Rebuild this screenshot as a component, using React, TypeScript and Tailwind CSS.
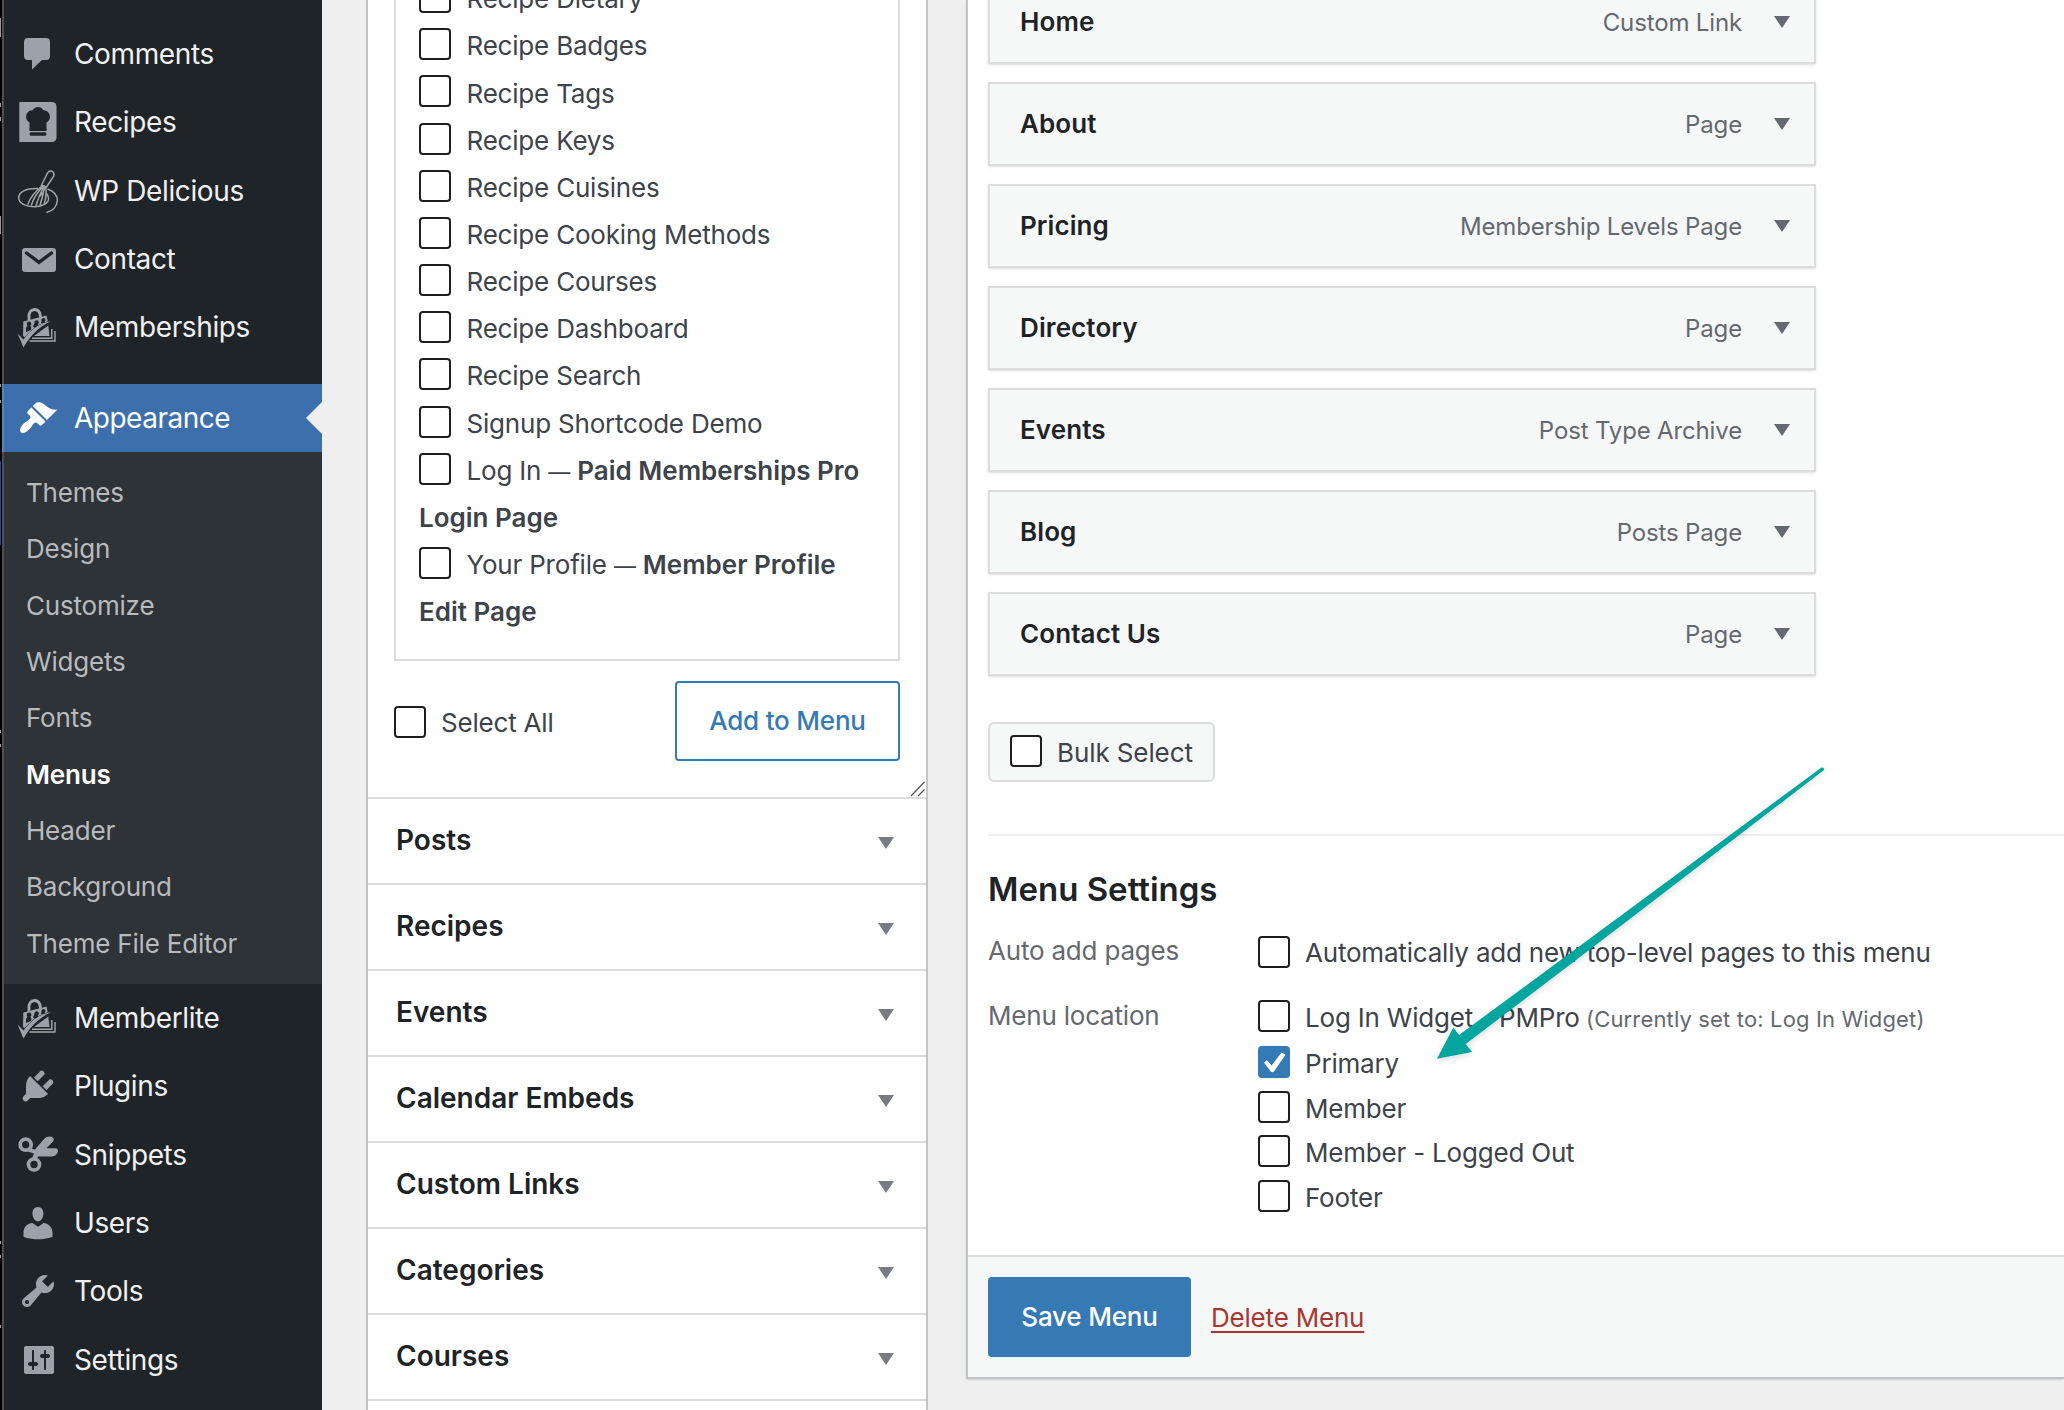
import type { ReactNode } from 'react';
import clsx from 'clsx';

const icons: Record<string, ReactNode> = {
  comments: <path d="M10 4H28a4 4 0 0 1 4 4V22a4 4 0 0 1-4 4H24L14 35.5V26H10a4 4 0 0 1-4-4V8a4 4 0 0 1 4-4z" />,
  recipes: (
    <>
      <path d="M1.3 0H34a4.5 4.5 0 0 1 4.5 4.5V35.500a4.500 4.500 0 0 1-4.500 4.500H1.300z" />
      <path
        d="M11.500 28V20.500C8.500 19 7.500 15.500 8.500 12.500C9.500 9.500 12 8.300 14.500 8.300C16 5.800 18 5 20 5S24 5.800 25.500 8.300C28 8.300 30.500 9.500 31.500 12.500C32.500 15.500 31.500 19 28.500 20.500V28z"
        fill="#1f2428"
      />
      <rect x="11.500" y="30.300" width="17" height="3.400" rx="1.700" fill="#1f2428" />
      <path d="M11.500 26.800H28.500V29H11.500z" fill="#1f2428" />
    </>
  ),
  whisk: (
    <g fill="none" stroke="#a2a7a9" strokeWidth="1.500" strokeLinecap="round">
      <path d="M23.800 13.500L29.500 2Q31.300-.8 34.200.3Q37 2 35.500 5.500L28.500 16" />
      <path d="M23.300 14.500Q26 14 28.300 16.500M23.500 15.500Q13 24 10 33M24.500 16Q16 25 13.500 34M25.500 16Q20.500 26 18 34.500M26.500 16.500Q24.500 27 22 34M28 17Q28.500 26 26.300 32.500M24 22L22 25" />
      <path d="M19.500 17.600C8 17.300.7 21 .7 26.800C.7 32.500 8 35.700 16 35.700C24 35.700 31 32 30.500 27.500C30.300 25.500 29.500 23.500 28.500 22.700" />
      <path d="M30 18.300C36 20 40 25 39.300 30C38.500 36 34 40 29 41.300" />
    </g>
  ),
  mail: (
    <>
      <rect x="4" y="9" width="34" height="24" rx="3" />
      <path d="M8.500 14L21 23.300L33.500 14" fill="none" stroke="#1f2428" strokeWidth="3.400" strokeLinecap="round" />
    </>
  ),
  pmpro: (
    <>
      <path d="M11 13.500V10C10.500 5.500 13 2.500 16.500 2.500S22.200 5 22.500 10V11" fill="none" stroke="#a2a7a9" strokeWidth="2.800" />
      <path d="M5.300 14.500L28.500 8.500L29.800 14.500C23 18 14 24 8 31L5 29z" />
      <path
        d="M8.800 17.500a2.300 2.300 0 1 1 3.500 1.300Q14 20 13 23L8 25V21Q8.500 19.500 9.500 19zM16.500 16a2.200 2.200 0 1 1 3.300 1.300L21 19L17 21L15 19.500zM23.500 13.500a2 2 0 1 1 3.300 1L28 16H23z"
        fill="#1f2428"
      />
      <path d="M16 29L30.300 18.500L31.500 29z" />
      <path d="M14 31.300H33.800V22M11.500 34H37V24" fill="none" stroke="#a2a7a9" strokeWidth="1.400" />
      <path d="M-.5 26.500L5.500 32.500C13 22 22 16 33 14.300C22 19 12 29 5.500 40.500z" stroke="#1f2428" strokeWidth="1" paintOrder="stroke" />
    </>
  ),
  brush: (
    <path
      transform="scale(2)"
      d="M14.480 11.060L7.410 3.990l1.500-1.500c.5-.56 2.300-.47 3.510.32 1.210.8 1.430 1.280 2.910 2.100 1.180.64 2.450 1.260 4.450.85zm-.71.71L6.700 4.700 4.930 6.470c-.39.39-.39 1.020 0 1.410l1.060 1.060c.39.39.39 1.030 0 1.420-.6.6-1.430 1.110-2.210 1.690-.35.26-.7.53-1.010.84C1.430 14.230.4 16.080 1.400 17.070c.99 1 2.840-.03 4.180-1.360.31-.31.58-.66.85-1.020.57-.78 1.080-1.610 1.690-2.210.39-.39 1.020-.39 1.410 0l1.060 1.060c.39.39 1.020.39 1.410 0z"
    />
  ),
  plug: (
    <path
      transform="scale(2)"
      d="M13.110 4.360L9.870 7.600 8 5.730l3.240-3.240c.35-.34 1.050-.2 1.560.32.52.51.66 1.210.31 1.550zm-8 1.770l.91-1.120 9.010 9.010-1.190.84c-.71.71-2.630 1.160-3.820 1.160H6.140L4.900 17.260c-.59.59-1.540.59-2.120 0-.59-.58-.59-1.530 0-2.120l1.240-1.240v-3.880c0-1.130.4-3.190 1.090-3.890zm7.260 3.970l3.240-3.240c.34-.35 1.040-.21 1.550.31.52.51.66 1.210.31 1.550l-3.240 3.250z"
    />
  ),
  scissors: (
    <>
      <circle cx="7.700" cy="9.700" r="5.500" fill="none" stroke="#9ca2a7" strokeWidth="3.700" />
      <circle cx="16" cy="29.500" r="5.500" fill="none" stroke="#9ca2a7" strokeWidth="3.700" />
      <path d="M11.500 13.500L17 14.500L26.500 3.500Q29 1 33.500 1.800Q37 3.500 35 6.500L28.500 13.200H37.500Q40.500 13.500 39.800 17Q38.500 21 34 21.500H20L18.500 25L14 23.500L16 18.500L9.500 16.500z" />
    </>
  ),
  user: (
    <path
      transform="scale(2)"
      d="M10 9.250c-2.270 0-2.730-3.440-2.730-3.440C7 4.020 7.820 2 9.970 2c2.160 0 2.980 2.020 2.710 3.810 0 0-.41 3.440-2.680 3.440zm0 2.570L12.720 10c2.390 0 4.520 2.330 4.520 4.530v2.490s-3.650 1.130-7.240 1.130c-3.650 0-7.240-1.130-7.240-1.130v-2.490c0-2.250 1.940-4.480 4.470-4.480z"
    />
  ),
  wrench: (
    <path
      transform="scale(2)"
      d="M16.680 9.770c-1.340 1.340-3.300 1.670-4.950.99l-5.410 6.520c-.99.99-2.590.99-3.580 0s-.99-2.590 0-3.570l6.520-5.420c-.68-1.650-.35-3.610.99-4.950 1.280-1.280 3.120-1.620 4.720-1.060l-2.890 2.890 2.820 2.820 2.860-2.870c.53 1.580.18 3.390-1.080 4.650zM3.810 16.210c.4.39 1.040.39 1.430 0 .4-.4.4-1.040 0-1.430-.39-.4-1.030-.4-1.430 0-.39.39-.39 1.030 0 1.430z"
    />
  ),
  sliders: (
    <path
      transform="scale(2)"
      d="M18 16V4c0-.55-.45-1-1-1H4c-.55 0-1 .45-1 1v12c0 .55.45 1 1 1h13c.55 0 1-.45 1-1zM8 11h1c.55 0 1 .45 1 1s-.45 1-1 1H8v1.500c0 .28-.22.5-.5.5s-.5-.22-.5-.5V13H6c-.55 0-1-.45-1-1s.45-1 1-1h1V5.500c0-.28.22-.5.5-.5s.5.22.5.5V11zm5-2h-1c-.55 0-1-.45-1-1s.45-1 1-1h1V5.500c0-.28.22-.5.5-.5s.5.22.5.5V7h1c.55 0 1 .45 1 1s-.45 1-1 1h-1v5.500c0 .28-.22.5-.5.5s-.5-.22-.5-.5V9z"
    />
  ),
};

const navTop = [
  { label: 'Comments', icon: 'comments' },
  { label: 'Recipes', icon: 'recipes' },
  { label: 'WP Delicious', icon: 'whisk' },
  { label: 'Contact', icon: 'mail' },
  { label: 'Memberships', icon: 'pmpro' },
];

const submenu = ['Themes', 'Design', 'Customize', 'Widgets', 'Fonts', 'Menus', 'Header', 'Background', 'Theme File Editor'];

const navBottom = [
  { label: 'Memberlite', icon: 'pmpro' },
  { label: 'Plugins', icon: 'plug' },
  { label: 'Snippets', icon: 'scissors' },
  { label: 'Users', icon: 'user' },
  { label: 'Tools', icon: 'wrench' },
  { label: 'Settings', icon: 'sliders' },
];

const pages: { label: string; state?: string }[] = [
  { label: 'Recipe Dietary' },
  { label: 'Recipe Badges' },
  { label: 'Recipe Tags' },
  { label: 'Recipe Keys' },
  { label: 'Recipe Cuisines' },
  { label: 'Recipe Cooking Methods' },
  { label: 'Recipe Courses' },
  { label: 'Recipe Dashboard' },
  { label: 'Recipe Search' },
  { label: 'Signup Shortcode Demo' },
  { label: 'Log In', state: 'Paid Memberships Pro Login Page' },
  { label: 'Your Profile', state: 'Member Profile Edit Page' },
];

const sections = ['Posts', 'Recipes', 'Events', 'Calendar Embeds', 'Custom Links', 'Categories', 'Courses', ''];

const menuItems = [
  { title: 'Home', type: 'Custom Link' },
  { title: 'About', type: 'Page' },
  { title: 'Pricing', type: 'Membership Levels Page' },
  { title: 'Directory', type: 'Page' },
  { title: 'Events', type: 'Post Type Archive' },
  { title: 'Blog', type: 'Posts Page' },
  { title: 'Contact Us', type: 'Page' },
];

const locations = [
  { label: 'Log In Widget - PMPro', note: '(Currently set to: Log In Widget)', row: 'h-[46px]' },
  { label: 'Primary', checked: true, row: 'h-[45px]' },
  { label: 'Member', row: 'h-[44px]' },
  { label: 'Member - Logged Out', row: 'h-[45px]' },
  { label: 'Footer', row: 'h-[45px]' },
];

function Checkbox({ checked, className }: { checked?: boolean; className?: string }) {
  return (
    <span
      className={clsx(
        'inline-block size-8 shrink-0 rounded-[4px]',
        checked ? 'bg-[#3579b5]' : 'border-2 border-[#1e1e1e] bg-white',
        className,
      )}
    >
      {checked && (
        <svg viewBox="0 0 32 32" className="size-8">
          <path d="M6 16.500L9 14.300L13.600 19.500L23.500 6.500L27.500 8.700L16 25.500Q14.300 26.800 12.700 25.500z" fill="#fff" />
        </svg>
      )}
    </span>
  );
}

function Arrow({ className }: { className?: string }) {
  return (
    <svg viewBox="0 0 16 12" className={clsx('h-3 w-4 shrink-0', className)}>
      <path d="M0 0H16L8 12z" fill="currentColor" />
    </svg>
  );
}

function NavItem({ label, icon }: { label: string; icon: string }) {
  return (
    <div className="flex h-[68.300px] items-center pl-[14px] text-[28px] text-[#f0f0f1]">
      <svg viewBox="0 0 40 40" className="mr-4 size-10 overflow-visible fill-[#9ca2a7]">
        {icons[icon]}
      </svg>
      <span className="tracking-[-0.380px]">{label}</span>
    </div>
  );
}

function Sidebar() {
  return (
    <div className="flex h-full w-[322px] shrink-0">
      {/* Edge of the window behind */}
      <svg viewBox="0 0 2 1410" className="h-full w-0.5 bg-black">
        <path d="M0 18h1v19H0zM0 103h1v4H0zM0 117h1v4H0zM0 216h1v18H0zM0 384h1v3H0zM0 400h1v3H0zM0 730h1v3H0zM0 744h1v3H0zM0 1241h1v3H0zM0 1255h1v3H0zM0 1325h1v3H0z" fill="#999" />
        <path d="M0 461h1v84H0z" fill="#2b3fa5" />
      </svg>
      <div className="h-full w-80 border-l-2 border-[#4b4f53] bg-[#1f2428] pt-5">
        {navTop.map((item) => (
          <NavItem key={item.label} {...item} />
        ))}

        <div className="-ml-0.5 mt-[22.500px] flex h-[68px] items-center border-l-2 border-[#5585b8] bg-[#3c6fab] pl-[14px] text-[28px] text-white">
          <svg viewBox="0 0 40 40" className="mr-4 size-10 fill-white">
            {icons.brush}
          </svg>
          <span className="tracking-[-0.500px]">Appearance</span>
          <svg viewBox="0 0 16 32" className="ml-auto h-8 w-4">
            <path d="M16 0L0 16L16 32z" fill="#efefef" />
          </svg>
        </div>
        <div className="h-[532px] bg-[#2e3337] pl-[22px] pt-[13px]">
          {submenu.map((label) => (
            <div
              key={label}
              className={clsx('leading-[56.350px]', label === 'Menus' ? 'font-semibold text-white' : 'text-[#b8bbbe]')}
            >
              {label}
            </div>
          ))}
        </div>

        {navBottom.map((item) => (
          <NavItem key={item.label} {...item} />
        ))}
      </div>
    </div>
  );
}

function AddItemsPanel() {
  return (
    <div className="ml-11 w-[562px] shrink-0 border-x-2 border-[#c3c4c7] bg-white">
      <div className="relative h-[797px] px-[26px]">
        <div className="h-[661px] overflow-hidden border-2 border-t-0 border-[#dcdcde] pl-[23px] pr-4">
          <div className="-mt-[24.800px]">
            {pages.map((page) => (
              <div key={page.label} className="leading-[47.150px]">
                <Checkbox className="-mt-2 mr-[15.500px] align-middle" />
                {page.label}
                {page.state && (
                  <>
                    {' '}
                    <span className="text-[22px] leading-none">—</span> <span className="font-semibold tracking-normal">{page.state}</span>
                  </>
                )}
              </div>
            ))}
          </div>
        </div>
        <div className="mt-5 flex h-20 items-center justify-between">
          <div className="flex items-center gap-[15px] pt-0.5">
            <Checkbox />
            <span>Select All</span>
          </div>
          <button className="h-20 w-[225px] rounded-[4px] border-2 border-[#3579b5] pb-0.5 font-medium text-[#3579b5]">Add to Menu</button>
        </div>
        <svg viewBox="0 0 16 16" className="absolute bottom-0 right-0 size-4">
          <path d="M1 15L14.500 1M8 15L14.500 8.500" stroke="#555" strokeWidth="1.300" />
        </svg>
      </div>
      {sections.map((title) => (
        <div key={title} className="flex h-[86px] items-center justify-between border-t-2 border-[#dcdcde] pl-7 pr-8">
          <h3 className="-mt-[3px] text-[28px] font-semibold tracking-normal text-[#1d2327]">{title}</h3>
          <Arrow className="mt-1 text-[#787c82]" />
        </div>
      ))}
    </div>
  );
}

function MenuPanel() {
  return (
    <div className="ml-[38px] flex h-[1379px] flex-1 flex-col border-b-2 border-l-2 border-[#c3c4c7] bg-white shadow-sm">
      <div className="flex-1 overflow-hidden pl-5">
        <div className="-mt-5 flex w-[828px] flex-col gap-[18px]">
          {menuItems.map((item) => (
            <div key={item.title} className="flex h-[84px] items-center border-2 border-[#dcdcde] bg-[#f6f7f7] pl-[30px] pr-6 shadow-sm">
              <span className="-mt-0.5 mr-auto font-semibold tracking-[0.100px] text-[#1d2327]">{item.title}</span>
              <span className="mr-8 mt-px text-[24px] tracking-[-0.150px] text-[#646970]">{item.type}</span>
              <Arrow className="text-[#646970]" />
            </div>
          ))}
        </div>

        <div className="mt-[46px] flex h-[60px] w-[227px] items-center gap-[15px] rounded-md border-2 border-[#dcdcde] bg-[#f6f7f7] pl-5">
          <Checkbox className="-mt-0.5" />
          <span className="tracking-[-0.100px]">Bulk Select</span>
        </div>

        {/* Menu settings */}
        <div className="mt-[52px] border-t-2 border-[#eeeeee] pt-[33px]">
          <h3 className="text-[33px] font-semibold leading-10 tracking-normal text-[#1d2327]">Menu Settings</h3>
          <div className="mt-[27px] flex h-16">
            <div className="-mt-px w-[270px] leading-8 text-[#646970]">Auto add pages</div>
            <div className="flex items-start gap-[15px] leading-8">
              <Checkbox />
              <span className="pt-px">Automatically add new top-level pages to this menu</span>
            </div>
          </div>
          <div className="flex">
            <div className="w-[270px] leading-8 text-[#646970]">Menu location</div>
            <div>
              {locations.map((loc) => (
                <div key={loc.label} className={clsx('flex items-start gap-[15px] leading-8', loc.row)}>
                  <Checkbox checked={loc.checked} />
                  <span className="pt-0.5">
                    {loc.label}
                    {loc.note && <span className="text-[22px] tracking-[0.150px] text-[#646970]"> {loc.note}</span>}
                  </span>
                </div>
              ))}
            </div>
          </div>
        </div>
      </div>

      <div className="flex h-[122px] items-center gap-5 border-t-2 border-[#dcdcde] bg-[#f6f7f7] pl-5">
        <button className="h-20 w-[203px] rounded-[4px] bg-[#3579b5] pb-0.5 font-medium text-white">Save Menu</button>
        <a className="text-[#a83732] underline decoration-2 underline-offset-4">Delete Menu</a>
      </div>
    </div>
  );
}

export default function App() {
  return (
    <div className="relative flex h-[1410px] w-[2064px] overflow-hidden bg-[#efefef] font-['Inter',sans-serif] text-[26px] tracking-[-0.200px] text-[#3c434a]">
      <Sidebar />
      <AddItemsPanel />
      <MenuPanel />
      {/* Callout pointing at the Primary location */}
      <svg viewBox="0 0 2064 1410" className="pointer-events-none absolute inset-0 size-full drop-shadow-[0_2px_3px_rgba(0,0,0,0.15)]">
        <path d="M1437 1058.700L1453.300 1027.500L1459 1035L1615 920L1821.500 767.500Q1824.500 767 1824 770L1628.500 920L1465.700 1044L1472 1052z" fill="#03a59f" />
      </svg>
    </div>
  );
}
